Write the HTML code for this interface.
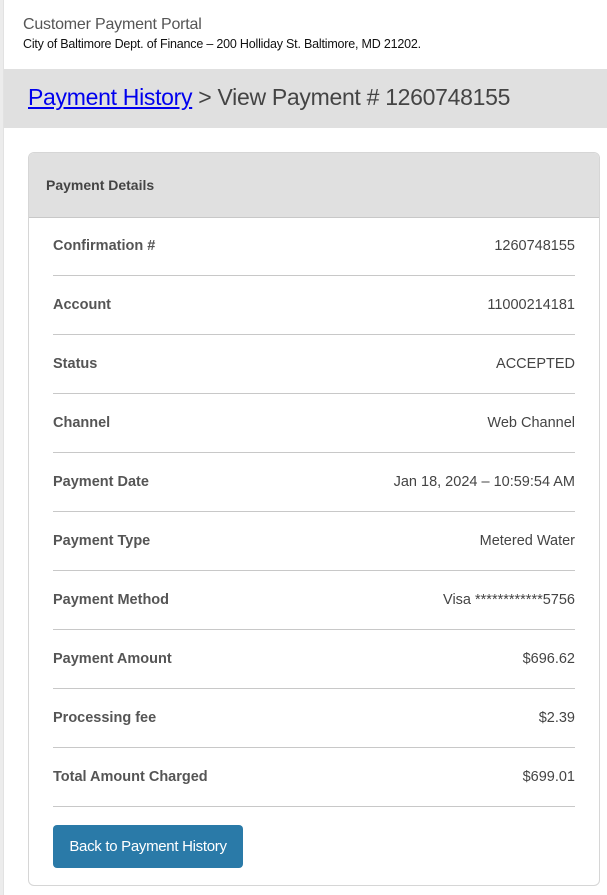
<!DOCTYPE html>
<html><head><style>
body{margin:0;width:607px;height:895px;overflow:hidden;background:#fff;font-family:"Liberation Sans",sans-serif;position:relative}
.lstrip{position:absolute;left:0;top:0;width:3px;height:895px;background:#ececec;border-right:1px solid #e2e2e2}
.top{position:absolute;left:23px;top:16px}
.t1{font-size:16px;color:#555;letter-spacing:-0.2px}
.t2{font-size:12.5px;color:#111;margin-top:3px;letter-spacing:-0.2px}
.bar{position:absolute;left:4px;top:69px;width:603px;height:59px;background:#e0e0e0}
.bar div{position:absolute;left:24px;top:15px;font-size:23px;color:#444;letter-spacing:-0.3px}
.bar a{color:#0000ee;text-decoration:underline}
.card{position:absolute;left:28px;top:152px;width:570px;height:732px;border:1px solid #d6d6d6;border-radius:6px;overflow:hidden}
.ch{height:64px;background:#e0e0e0;border-bottom:1px solid #c8c8c8;font-size:14px;font-weight:bold;color:#444;line-height:64px;padding-left:17px}
.row{position:absolute;left:24px;width:522px;height:58px;border-bottom:1px solid #c8c8c8;font-size:14.5px;line-height:58px;color:#444}
.row b{color:#555}
.row span{position:absolute;right:0;top:0}
.btn{position:absolute;left:24px;top:672px;width:190px;height:43px;background:#2a7aa8;border-radius:4px;color:#fff;font-size:15px;line-height:43px;text-align:center;letter-spacing:-0.3px}
</style></head><body>
<div class="lstrip"></div>
<div class="top"><div class="t1">Customer Payment Portal</div><div class="t2">City of Baltimore Dept. of Finance – 200 Holliday St. Baltimore, MD 21202.</div></div>
<div class="bar"><div><a>Payment History</a> &gt; View Payment # 1260748155</div></div>
<div class="card"><div class="ch">Payment Details</div>
<div class="row" style="top:64px"><b>Confirmation #</b><span>1260748155</span></div>
<div class="row" style="top:123px"><b>Account</b><span>11000214181</span></div>
<div class="row" style="top:182px"><b>Status</b><span>ACCEPTED</span></div>
<div class="row" style="top:241px"><b>Channel</b><span>Web Channel</span></div>
<div class="row" style="top:300px"><b>Payment Date</b><span>Jan 18, 2024 – 10:59:54 AM</span></div>
<div class="row" style="top:359px"><b>Payment Type</b><span>Metered Water</span></div>
<div class="row" style="top:418px"><b>Payment Method</b><span>Visa ************5756</span></div>
<div class="row" style="top:477px"><b>Payment Amount</b><span>$696.62</span></div>
<div class="row" style="top:536px"><b>Processing fee</b><span>$2.39</span></div>
<div class="row" style="top:595px"><b>Total Amount Charged</b><span>$699.01</span></div>
<div class="btn">Back to Payment History</div>
</div>
</body></html>
